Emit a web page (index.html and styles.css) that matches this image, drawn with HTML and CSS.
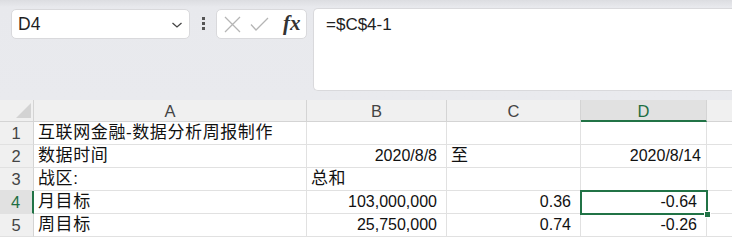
FILE: index.html
```html
<!DOCTYPE html>
<html lang="zh-CN">
    <head>
        <meta charset="UTF-8">
        <title>互联网金融-数据分析周报制作</title>
        <link rel="stylesheet" href="styles.css">
    </head>
    <body>
        <div class="toolbar">
            <div class="namebox">
                <span>D4</span>
                <svg class="chevron" width="12" height="8" viewBox="0 0 12 8"><path d="M1.5 2 L6 6 L10.5 2" fill="none" stroke="#444" stroke-width="1.3"/></svg>
            </div>
            <div class="dots"><i></i><i></i><i></i></div>
            <div class="fxbox">
                <svg width="17" height="17" viewBox="0 0 17 17"><path d="M1 1 L16 16 M16 1 L1 16" stroke="#b5b5b5" stroke-width="1.3" fill="none"/></svg>
                <svg width="19" height="15" viewBox="0 0 19 15"><path d="M1 7.5 L6 13 L18 1" stroke="#b5b5b5" stroke-width="1.3" fill="none"/></svg>
                <span class="fx">fx</span>
            </div>
            <div class="formula">=$C$4-1</div>
        </div>
        <div class="sheet">
            <div class="corner"><div class="tri"></div></div>
            <div class="colhead">A</div>
            <div class="colhead">B</div>
            <div class="colhead">C</div>
            <div class="colhead sel">D</div>
            <div class="colhead last"></div>

            <div class="rowhead">1</div>
            <div class="cell cjk">互联网金融-数据分析周报制作</div>
            <div class="cell"></div>
            <div class="cell"></div>
            <div class="cell"></div>
            <div class="cell last"></div>

            <div class="rowhead">2</div>
            <div class="cell cjk">数据时间</div>
            <div class="cell num">2020/8/8</div>
            <div class="cell cjk">至</div>
            <div class="cell num tight">2020/8/14</div>
            <div class="cell last"></div>

            <div class="rowhead">3</div>
            <div class="cell cjk">战区:</div>
            <div class="cell cjk">总和</div>
            <div class="cell"></div>
            <div class="cell"></div>
            <div class="cell last"></div>

            <div class="rowhead sel">4</div>
            <div class="cell cjk">月目标</div>
            <div class="cell num">103,000,000</div>
            <div class="cell num">0.36</div>
            <div class="cell num active">-0.64<span class="handle"></span></div>
            <div class="cell last"></div>

            <div class="rowhead">5</div>
            <div class="cell cjk">周目标</div>
            <div class="cell num">25,750,000</div>
            <div class="cell num">0.74</div>
            <div class="cell num">-0.26</div>
            <div class="cell last"></div>
        </div>
    </body>
</html>
```

FILE: styles.css
```css
html, body{
    margin: 0;
    padding: 0;
}
body{
    width: 732px;
    height: 240px;
    overflow: hidden;
    background: #ffffff;
    font-family: "Liberation Sans", "Noto Sans CJK SC", sans-serif;
    color: #1f1f1f;
}
.toolbar{
    height: 100px;
    box-sizing: border-box;
    background: linear-gradient(#dcdde1 0px, #e8e9ed 7px, #e9eaee 100%);
    display: flex;
    align-items: flex-start;
    padding: 8px 0 0 11px;
}
.namebox{
    margin-top: 1px;
    width: 179px;
    height: 30px;
    box-sizing: border-box;
    background: #ffffff;
    border: 1px solid #d9d9dc;
    border-radius: 5px;
    display: flex;
    align-items: center;
    justify-content: space-between;
    padding: 0 6px 0 6px;
    font-size: 17.5px;
}
.chevron{
    margin-top: 2px;
}
.dots{
    width: 26px;
    margin-top: 9px;
    display: flex;
    flex-direction: column;
    align-items: center;
    gap: 2px;
}
.dots>i{
    display: block;
    width: 3px;
    height: 3px;
    background: #555555;
}
.fxbox{
    margin-top: 1px;
    width: 91px;
    height: 30px;
    box-sizing: border-box;
    background: #ffffff;
    border: 1px solid #d9d9dc;
    border-radius: 5px;
    display: flex;
    align-items: center;
    padding: 0 0 0 7px;
    gap: 9px;
}
.fx{
    font-family: "Liberation Serif", "DejaVu Serif", serif;
    font-style: italic;
    font-weight: bold;
    font-size: 21px;
    color: #333333;
    margin-left: 5px;
    margin-top: -2px;
}
.formula{
    margin-left: 6px;
    flex: 1;
    height: 83px;
    box-sizing: border-box;
    background: #ffffff;
    border: 1px solid #d9d9dc;
    border-right: none;
    border-radius: 5px 0 0 5px;
    padding: 6px 0 0 12px;
    font-size: 17px;
    color: #222222;
}
.sheet{
    display: grid;
    grid-template-columns: 34px 273px 140px 134px 126px 1fr;
    grid-template-rows: 22px repeat(5, 23px);
}
.corner, .colhead, .rowhead{
    background: #f0f0f0;
    color: #444444;
    box-sizing: border-box;
    font-size: 16.5px;
}
.corner{
    position: relative;
    border-right: 1px solid #d4d4d4;
    border-bottom: 1px solid #d4d4d4;
}
.tri{
    position: absolute;
    right: 2px;
    bottom: 3px;
    width: 0;
    height: 0;
    border-left: 15px solid transparent;
    border-bottom: 15px solid #d3d3d3;
}
.colhead{
    border-right: 1px solid #d4d4d4;
    border-bottom: 1px solid #d4d4d4;
    display: flex;
    align-items: center;
    justify-content: center;
    padding-top: 2px;
}
.colhead.sel{
    background: #e1e1e1;
    color: #1e6e42;
    border-bottom: 2px solid #217346;
}
.colhead.last{
    border-right: none;
}
.rowhead{
    border-right: 1px solid #d4d4d4;
    border-bottom: 1px solid #e1e1e1;
    display: flex;
    align-items: center;
    justify-content: center;
    padding-right: 1px;
}
.rowhead.sel{
    background: #e1e1e1;
    color: #1e6e42;
    border-right: 2px solid #217346;
}
.cell{
    box-sizing: border-box;
    border-right: 1px solid #e1e1e1;
    border-bottom: 1px solid #e1e1e1;
    font-size: 16px;
    line-height: 22px;
    padding: 0 4px;
    white-space: nowrap;
    overflow: visible;
    color: #111111;
}
.cell.cjk{
    font-size: 17px;
    letter-spacing: 0.6px;
}
.cell.num{
    text-align: right;
    padding-right: 9px;
}
.cell.tight{
    padding-right: 5px;
}
.cell.last{
    border-right: none;
}
.cell.active{
    position: relative;
    outline: 2px solid #217346;
    outline-offset: -1px;
}
.handle{
    position: absolute;
    right: -5px;
    bottom: -5px;
    width: 5px;
    height: 5px;
    background: #217346;
    border: 1px solid #ffffff;
}
```
